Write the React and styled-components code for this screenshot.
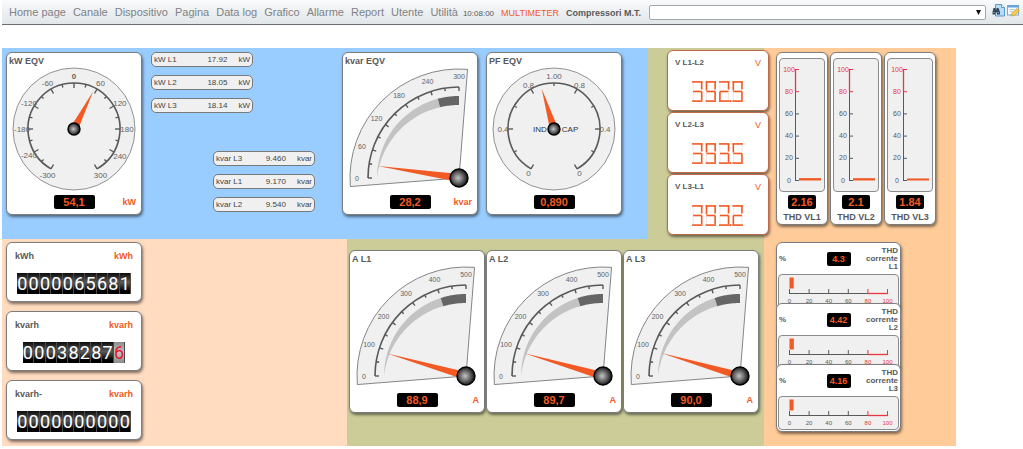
import React from 'react';
import styled, { createGlobalStyle } from 'styled-components';

const ORANGE = '#f15a24';
const GREY = '#58595b';
const RED = '#e8383d';

const menu = [
  'Home page', 'Canale', 'Dispositivo', 'Pagina', 'Data log',
  'Grafico', 'Allarme', 'Report', 'Utente', 'Utilità',
];

const activePower = [
  { label: 'kW L1', value: '17.92', unit: 'kW' },
  { label: 'kW L2', value: '18.05', unit: 'kW' },
  { label: 'kW L3', value: '18.14', unit: 'kW' },
];

const reactivePower = [
  { label: 'kvar L3', value: '9.460', unit: 'kvar' },
  { label: 'kvar L1', value: '9.170', unit: 'kvar' },
  { label: 'kvar L2', value: '9.540', unit: 'kvar' },
];

const voltages = [
  { label: 'V L1-L2', value: '392.9' },
  { label: 'V L2-L3', value: '393.5' },
  { label: 'V L3-L1', value: '393.2' },
];

const currents = [
  { label: 'A L1', value: 88.9, text: '88,9' },
  { label: 'A L2', value: 89.7, text: '89,7' },
  { label: 'A L3', value: 90, text: '90,0' },
];

const thdVoltages = [
  { label: 'THD VL1', value: '2.16' },
  { label: 'THD VL2', value: '2.1' },
  { label: 'THD VL3', value: '1.84' },
];

const thdCurrents = [
  { phase: 'L1', value: '4.3' },
  { phase: 'L2', value: '4.42' },
  { phase: 'L3', value: '4.16' },
];

const counters = [
  { label: 'kWh', unit: 'kWh', digits: '0000065681' },
  { label: 'kvarh', unit: 'kvarh', digits: '000382876', decimal: true },
  { label: 'kvarh-', unit: 'kvarh', digits: '0000000000' },
];

// 0 degrees points up, angles grow clockwise
const polar = (cx, cy, r, deg) => {
  const a = (deg * Math.PI) / 180;
  return [cx + r * Math.sin(a), cy - r * Math.cos(a)];
};

const Tick = ({ cx, cy, r, length, deg, width }) => {
  const [x1, y1] = polar(cx, cy, r, deg);
  const [x2, y2] = polar(cx, cy, r - length, deg);
  return <line x1={x1} y1={y1} x2={x2} y2={y2} stroke={GREY} strokeWidth={width} />;
};

const Needle = ({ cx, cy, length, base, deg }) => {
  const tip = polar(cx, cy, length, deg);
  const left = polar(cx, cy, base, deg - 90);
  const right = polar(cx, cy, base, deg + 90);
  return <polygon points={`${tip} ${left} ${right}`} fill={ORANGE} />;
};

const Hub = ({ cx, cy, r, id }) => (
  <>
    <defs>
      <radialGradient id={id} cx="45%" cy="50%" r="50%">
        <stop offset="0%" stopColor="#c4c4c4" />
        <stop offset="55%" stopColor="#6a6a6a" />
        <stop offset="100%" stopColor="#1c1c1c" />
      </radialGradient>
    </defs>
    <circle cx={cx} cy={cy} r={r} fill={`url(#${id})`} stroke="#000" strokeWidth="1.4" />
  </>
);

const RoundDial = ({ id, labels, angle, tips, sides }) => {
  const cx = 67;
  const cy = 62;
  const ticks = [];
  const step = labels.length > 7 ? 15 : 30;
  for (let d = -150; d <= 150; d += step) ticks.push(d);
  const [x1, y1] = polar(cx, cy, 46, -150);
  const [x2, y2] = polar(cx, cy, 46, 150);

  return (
    <DialSvg viewBox="0 0 134 124">
      <circle cx={cx} cy={cy} r="61" fill="#f0f0f0" stroke="#77787a" strokeWidth="0.8" />
      <path d={`M${x1} ${y1}A46 46 0 1 1 ${x2} ${y2}`} fill="none" stroke={GREY} strokeWidth="1.6" />
      {ticks.map((d) => (
        <Tick key={d} cx={cx} cy={cy} r={46} length={tips.includes(d) ? 5 : 3} deg={d} width={1.4} />
      ))}
      {labels.map(([text, d, r]) => {
        const [x, y] = polar(cx, cy, r || 53, d);
        return (
          <ScaleText key={d} x={x} y={y + 3} $size={8} $bold={text === '0' && d === 0}>
            {text}
          </ScaleText>
        );
      })}
      {sides && (
        <>
          <ScaleText x={cx - 14} y={cy + 3} $size={8} $color="#333">IND</ScaleText>
          <ScaleText x={cx + 16} y={cy + 3} $size={8} $color="#333">CAP</ScaleText>
        </>
      )}
      <Needle cx={cx} cy={cy} length={42} base={4} deg={angle} />
      <Hub cx={cx} cy={cy} r={6} id={id} />
    </DialSvg>
  );
};

const QuarterDial = ({ id, max, value, alarm }) => {
  const cx = 116;
  const cy = 111;
  const toDeg = (v) => -90 + (v / max) * 90;
  const [ox1, oy1] = polar(cx, cy, 109, -94.5);
  const [ox2, oy2] = polar(cx, cy, 109, 4.5);
  const ticks = Array.from({ length: 11 }, (_, i) => i);

  // band gets thicker as the value grows
  const band = (from, to) => {
    const outer = [];
    const inner = [];
    for (let i = 0; i <= 24; i += 1) {
      const d = from + ((to - from) * i) / 24;
      const thickness = 9 * Math.cos((d * Math.PI) / 180);
      outer.push(polar(cx, cy, 82, d).join(','));
      inner.unshift(polar(cx, cy, 82 - thickness, d).join(','));
    }
    return [...outer, ...inner].join(' ');
  };

  return (
    <DialSvg viewBox="0 0 134 124">
      <path
        d={`M${cx} ${cy}L${ox1} ${oy1}A109 109 0 0 1 ${ox2} ${oy2}Z`}
        fill="#f0f0f0"
        stroke="#77787a"
        strokeWidth="0.9"
      />
      <polygon points={band(-90, toDeg(alarm))} fill="#c3c3c3" />
      <polygon points={band(toDeg(alarm), 0)} fill="#666" />
      <path
        d={`M${cx - 91} ${cy}A91 91 0 0 1 ${cx} ${cy - 91}`}
        fill="none"
        stroke={GREY}
        strokeWidth="1.6"
      />
      {ticks.map((i) => (
        <Tick key={i} cx={cx} cy={cy} r={91} length={i % 2 ? 3 : 4} deg={-90 + i * 9} width={1.4} />
      ))}
      {[0, 1, 2, 3, 4, 5].map((i) => {
        const [x, y] = polar(cx, cy, 102, -90 + i * 18);
        return (
          <ScaleText key={i} x={x} y={y + 3} $size={7}>
            {(max / 5) * i}
          </ScaleText>
        );
      })}
      <Needle cx={cx} cy={cy} length={82} base={4} deg={toDeg(value)} />
      <Hub cx={cx} cy={cy} r={9} id={id} />
    </DialSvg>
  );
};

const scale = [0, 20, 40, 60, 80, 100];

const VerticalScale = ({ value }) => (
  <svg width="44" height="132" viewBox="0 0 44 132">
    <line x1="15.5" y1="32" x2="15.5" y2="122" stroke={GREY} />
    <line x1="15.5" y1="10" x2="15.5" y2="32" stroke={RED} strokeWidth="1.3" />
    {scale.map((v) => {
      const y = 121.5 - v * 1.11;
      const color = v >= 80 ? RED : GREY;
      return (
        <g key={v}>
          <line x1="15" y1={y} x2="19" y2={y} stroke={color} />
          <ScaleText x={9} y={y + 2} $size={7} $color={color}>{v}</ScaleText>
        </g>
      );
    })}
    <rect x="19" y={121.5 - value * 1.11} width="22" height={value * 1.11} fill={ORANGE} />
  </svg>
);

const HorizontalScale = ({ value }) => (
  <svg width="119" height="32" viewBox="0 0 119 32">
    <line x1="10" y1="18.5" x2="89" y2="18.5" stroke={GREY} />
    <line x1="89" y1="18.5" x2="109" y2="18.5" stroke={RED} strokeWidth="1.3" />
    {scale.map((v) => {
      const x = 10.5 + v * 0.98;
      const color = v >= 80 ? RED : GREY;
      return (
        <g key={v}>
          <line x1={x} y1="14" x2={x} y2="19" stroke={color} />
          <ScaleText x={x} y={28} $size={6} $color={color}>{v}</ScaleText>
        </g>
      );
    })}
    <rect x="10.5" y="2.5" width={value * 0.98} height="11" fill={ORANGE} />
  </svg>
);

// segment order: top, top right, bottom right, bottom, bottom left, top left, middle
const segmentLines = [
  [0, 1, 11, 1], [10, 1, 10, 9], [10, 11, 10, 20], [0, 21, 11, 21],
  [1, 11, 1, 21], [1, 1, 1, 10], [1, 11, 10, 11],
];
const segmentMap = { 2: '1101101', 3: '1111001', 5: '1011011', 9: '1111011' };

const SegmentDisplay = ({ value }) => {
  const digits = value.replace('.', '').split('');
  return (
    <svg width="56" height="24" viewBox="0 0 56 24" role="img" aria-label={value}>
      {digits.map((digit, i) => (
        <g key={i} transform={`translate(${i * 14 + 1} 1)`}>
          {segmentLines.map(([x1, y1, x2, y2], s) => (
            segmentMap[digit][s] === '0' && (
              <line key={s} x1={x1} y1={y1} x2={x2} y2={y2} stroke="#f1e6e6" />
            )
          ))}
          {segmentLines.map(([x1, y1, x2, y2], s) => (
            segmentMap[digit][s] === '1' && (
              <line key={s} x1={x1} y1={y1} x2={x2} y2={y2} stroke={ORANGE} strokeWidth="1.7" />
            )
          ))}
        </g>
      ))}
      <rect x="40" y="21" width="2" height="2" fill={ORANGE} />
    </svg>
  );
};

const SearchIcon = () => (
  <svg width="13" height="13" viewBox="0 0 13 13">
    <path d="M3.5 .5h6l3 3v8.500h-9z" fill="#b9dcf5" stroke="#5b9bd0" />
    <path d="M9.500 .5v3h3" fill="#fff" stroke="#5b9bd0" />
    <path d="M1.500 4h2v1.500h1V4h2l1.500 4v2.500H5V8.500H3.500v2H.5V8z" fill="#34495e" />
    <path d="M1.500 8.500h1M5.800 8.500h1" stroke="#a9c4dc" />
  </svg>
);

const EditIcon = () => (
  <svg width="13" height="13" viewBox="0 0 13 13">
    <rect x=".5" y="1.500" width="11" height="9.500" fill="#f4f9fd" stroke="#7fa8cf" />
    <rect x="1" y="1" width="10.500" height="2.500" fill="#6aa2dc" />
    <path d="M2.500 5.500h5M2.500 7.500h3" stroke="#b7cbe0" />
    <path d="M4 12l1-3 5-4.500 2.300 2.300L7.500 11.500z" fill="#f5cf4b" stroke="#c79a2b" strokeWidth=".7" />
  </svg>
);

const App = () => {
  return (
    <>
      <GlobalStyle />
      <Header>
        <Nav>
          {menu.map((item) => (
            <NavLink key={item} href="#">{item}</NavLink>
          ))}
        </Nav>
        <Clock>10:08:00</Clock>
        <DeviceType>MULTIMETER</DeviceType>
        <DeviceLabel htmlFor="device">Compressori M.T.</DeviceLabel>
        <SelectWrap>
          <Select id="device" defaultValue="">
            <option value="" />
          </Select>
          <SelectArrow viewBox="0 0 6 6">
            <path d="M0 0h6L3 6z" fill="#111" />
          </SelectArrow>
        </SelectWrap>
        <IconButton aria-label="Cerca"><SearchIcon /></IconButton>
        <IconButton aria-label="Modifica"><EditIcon /></IconButton>
      </Header>

      <Board>
        <PowerZone>
          <Card>
            <CardTitle>kW EQV</CardTitle>
            <RoundDial
              id="hub-kw"
              angle={54.1 * 0.5}
              tips={[-150, -120, -90, -60, -30, 0, 30, 60, 90, 120, 150]}
              labels={[
                ['-300', -150], ['-240', -120, 52], ['-180', -90, 52], ['-120', -60, 52], ['-60', -30],
                ['0', 0], ['60', 30], ['120', 60], ['180', 90], ['240', 120], ['300', 150],
              ]}
            />
            <CardFooter>
              <ValueBox>54,1</ValueBox>
              <Unit>kW</Unit>
            </CardFooter>
          </Card>

          <Readings>
            <ReadingList>
              {activePower.map((r) => (
                <Reading key={r.label}>
                  <ReadingLabel>{r.label}</ReadingLabel>
                  <span>{r.value}</span>
                  <span>{r.unit}</span>
                </Reading>
              ))}
            </ReadingList>
            <ReadingList $end>
              {reactivePower.map((r) => (
                <Reading key={r.label}>
                  <ReadingLabel>{r.label}</ReadingLabel>
                  <span>{r.value}</span>
                  <span>{r.unit}</span>
                </Reading>
              ))}
            </ReadingList>
          </Readings>

          <CardRow>
            <Card>
              <CardTitle>kvar EQV</CardTitle>
              <QuarterDial id="hub-kvar" max={300} value={28.2} alarm={250} />
              <CardFooter>
                <ValueBox>28,2</ValueBox>
                <Unit>kvar</Unit>
              </CardFooter>
            </Card>
            <Card>
              <CardTitle>PF EQV</CardTitle>
              <RoundDial
                id="hub-pf"
                angle={-17}
                sides
                tips={[-150, -90, -30, 30, 90, 150]}
                labels={[
                  ['0', -150, 51], ['0.4', -90, 51], ['0.8', -30, 51], ['1.00', 0],
                  ['0.8', 30, 51], ['0.4', 90, 51], ['0', 150, 51],
                ]}
              />
              <CardFooter>
                <ValueBox>0,890</ValueBox>
              </CardFooter>
            </Card>
          </CardRow>
        </PowerZone>

        <VoltageZone>
          {voltages.map((v) => (
            <VoltageCard key={v.label}>
              <VoltageHead>
                {v.label}
                <VoltageUnit>V</VoltageUnit>
              </VoltageHead>
              <SegmentDisplay value={v.value} />
            </VoltageCard>
          ))}
        </VoltageZone>

        <ThdZone>
          <ThdRow>
            {thdVoltages.map((t) => (
              <ThdVoltageCard key={t.label}>
                <ScalePanel><VerticalScale value={Number(t.value)} /></ScalePanel>
                <ValueBox $width={28}>{t.value}</ValueBox>
                <ThdLabel>{t.label}</ThdLabel>
              </ThdVoltageCard>
            ))}
          </ThdRow>
          <ThdStack>
            {thdCurrents.map((t) => (
              <ThdCurrentCard key={t.phase}>
                <ThdHead>
                  <span>%</span>
                  <ValueBox $width={24} $small>{t.value}</ValueBox>
                  <ThdName>THD corrente {t.phase}</ThdName>
                </ThdHead>
                <ScalePanel><HorizontalScale value={Number(t.value)} /></ScalePanel>
              </ThdCurrentCard>
            ))}
          </ThdStack>
        </ThdZone>

        <EnergyZone>
          {counters.map((c) => (
            <CounterCard key={c.label}>
              <CounterHead>
                {c.label}
                <CounterUnit>{c.unit}</CounterUnit>
              </CounterHead>
              <Counter>
                {c.digits.split('').map((d, i) => (
                  <Digit key={i} $decimal={c.decimal && i === c.digits.length - 1}>{d}</Digit>
                ))}
              </Counter>
            </CounterCard>
          ))}
        </EnergyZone>

        <CurrentZone>
          {currents.map((c) => (
            <Card key={c.label}>
              <CardTitle>{c.label}</CardTitle>
              <QuarterDial id={`hub-${c.text}`} max={500} value={c.value} alarm={400} />
              <CardFooter>
                <ValueBox>{c.text}</ValueBox>
                <Unit>A</Unit>
              </CardFooter>
            </Card>
          ))}
        </CurrentZone>
      </Board>
    </>
  );
};

const GlobalStyle = createGlobalStyle`
  * {
    box-sizing: border-box;
  }

  body {
    margin: 0;
    background: #fff;
    color: ${GREY};
    font-family: "Liberation Sans", Arial, sans-serif;
    font-size: 8px;
  }

  svg {
    display: block;
  }
`;

const Header = styled.header`
  display: flex;
  align-items: center;
  height: 25px;
  margin-left: 2px;
  padding: 0 3px 0 7px;
  background: linear-gradient(#f9fafb, #e1e6e9);
  border-bottom: 1px solid #6b6e73;
`;

const Nav = styled.nav`
  display: flex;
  gap: 7px;
`;

const NavLink = styled.a`
  color: #808285;
  font-size: 11px;
  line-height: 14px;
  text-decoration: none;
  white-space: nowrap;
`;

const Clock = styled.span`
  margin: 3px 7px 0 5px;
  font-size: 8px;
`;

const DeviceType = styled.span`
  margin: 2px 7px 0 0;
  color: ${ORANGE};
  font-size: 9px;
`;

const DeviceLabel = styled.label`
  margin: 2px 8px 0 0;
  font-size: 9px;
  font-weight: bold;
  white-space: nowrap;
`;

const SelectWrap = styled.div`
  position: relative;
  flex: 1;
  margin-right: 6px;
`;

const Select = styled.select`
  display: block;
  width: 100%;
  height: 15px;
  appearance: none;
  background: #fff;
  border: 1px solid #a3a7ab;
  border-radius: 2px;
  font-size: 9px;
`;

const SelectArrow = styled.svg`
  position: absolute;
  right: 5px;
  top: 5px;
  width: 5px;
  height: 5px;
  pointer-events: none;
`;

const IconButton = styled.button`
  margin: 0 0 3px;
  padding: 0;
  border: none;
  background: none;
  cursor: pointer;

  & + & {
    margin-left: 2px;
  }
`;

const Board = styled.main`
  display: grid;
  grid-template-columns: minmax(0, 345fr) minmax(0, 301fr) minmax(0, 116fr) minmax(0, 192fr);
  margin: 23px 67px 0 2px;
`;

const PowerZone = styled.section`
  grid-area: 1 / 1 / 2 / 3;
  display: flex;
  align-items: flex-start;
  padding: 4px 4px 24px;
  background: #99ccff;
`;

const VoltageZone = styled.section`
  grid-area: 1 / 3 / 2 / 4;
  position: relative;
  z-index: 1;
  display: flex;
  flex-direction: column;
  gap: 1px;
  padding: 2px 0 0 19px;
  background: #cccc99;
`;

const ThdZone = styled.section`
  grid-area: 1 / 4 / 3 / 5;
  padding: 4px 0 12px 12px;
  background: #ffcc99;
`;

const EnergyZone = styled.section`
  grid-area: 2 / 1 / 3 / 2;
  display: flex;
  flex-direction: column;
  gap: 9px;
  padding: 3px 4px 6px;
  background: #ffdbc0;
`;

const CurrentZone = styled.section`
  grid-area: 2 / 2 / 3 / 4;
  display: flex;
  align-items: flex-start;
  gap: 1px;
  padding: 11px 2px;
  background: #cccc99;
`;

const Panel = styled.div`
  background: #fff;
  border: 1px solid #7d7d7d;
  border-radius: 6px;
  box-shadow: 1px 2px 3px rgba(0, 0, 0, 0.5);
`;

const Card = styled(Panel)`
  flex: none;
  width: 136px;
  height: 163px;
`;

const CardRow = styled.div`
  display: flex;
  gap: 8px;
`;

const CardTitle = styled.h2`
  margin: 0;
  padding: 2px 2px 0;
  font-size: 9px;
  line-height: 12px;
`;

const DialSvg = styled.svg`
  width: 134px;
  height: 124px;
`;

const ScaleText = styled.text`
  fill: ${(p) => p.$color || '#626365'};
  font-size: ${(p) => p.$size}px;
  font-weight: ${(p) => (p.$bold ? 'bold' : 'normal')};
  text-anchor: middle;
`;

const CardFooter = styled.div`
  display: grid;
  grid-template-columns: 1fr auto 1fr;
  align-items: center;
  margin-top: 4px;
  padding: 0 5px;
`;

const ValueBox = styled.output`
  grid-column: 2;
  width: ${(p) => p.$width || 41}px;
  height: 14px;
  border-radius: 2px;
  background: #000;
  color: ${ORANGE};
  font-size: ${(p) => (p.$small ? 9 : 11)}px;
  font-weight: bold;
  line-height: 14px;
  text-align: center;
`;

const Unit = styled.span`
  justify-self: end;
  color: ${ORANGE};
  font-size: 9px;
  font-weight: bold;
`;

const Readings = styled.div`
  display: flex;
  flex-direction: column;
  gap: 38px;
  width: 164px;
  margin: 0 27px 0 9px;
`;

const ReadingList = styled.div`
  display: flex;
  flex-direction: column;
  gap: 8px;
  align-self: ${(p) => (p.$end ? 'flex-end' : 'flex-start')};
  width: 102px;
`;

const Reading = styled.div`
  display: flex;
  gap: 11px;
  height: 15px;
  padding: 0 2px;
  background: #f0f0f0;
  border: 1px solid #77787a;
  border-radius: 5px;
  color: #444;
  line-height: 13px;
`;

const ReadingLabel = styled.span`
  flex: 1;
`;

const VoltageCard = styled(Panel)`
  display: flex;
  flex-direction: column;
  align-items: center;
  gap: 12px;
  width: 102px;
  height: 61px;
  padding: 7px;
  border-color: #c0694a;
`;

const VoltageHead = styled.div`
  display: flex;
  justify-content: space-between;
  width: 100%;
  font-weight: bold;
  line-height: 10px;
`;

const VoltageUnit = styled.span`
  color: ${ORANGE};
  font-size: 9px;
  font-weight: normal;
`;

const ThdRow = styled.div`
  display: flex;
  gap: 2px;
`;

const ThdVoltageCard = styled(Panel)`
  display: flex;
  flex-direction: column;
  align-items: center;
  gap: 3px;
  width: 52px;
  height: 173px;
  padding-top: 5px;
`;

const ScalePanel = styled.div`
  background: #f0f0f0;
  border: 1px solid #8a8b8d;
  border-radius: 4px;
`;

const ThdLabel = styled.div`
  font-size: 9px;
  font-weight: bold;
  line-height: 10px;
`;

const ThdStack = styled.div`
  display: flex;
  flex-direction: column;
  margin-top: 17px;
`;

const ThdCurrentCard = styled(Panel)`
  width: 125px;
  height: 68px;
  padding: 0 1px;

  & + & {
    margin-top: -7px;
  }
`;

const ThdHead = styled.div`
  display: grid;
  grid-template-columns: 1fr auto 1fr;
  align-items: center;
  height: 31px;
  padding: 0 1px;
  font-weight: bold;
  line-height: 8px;
`;

const ThdName = styled.span`
  justify-self: end;
  width: 34px;
  text-align: right;
`;

const CounterCard = styled(Panel)`
  width: 136px;
  height: 60px;
  padding: 8px;
`;

const CounterHead = styled.div`
  display: flex;
  justify-content: space-between;
  font-size: 9px;
  font-weight: bold;
  line-height: 10px;
`;

const CounterUnit = styled.span`
  color: ${ORANGE};
`;

const Counter = styled.div`
  display: flex;
  justify-content: center;
  margin: 12px 2px 0;
`;

const Digit = styled.span`
  width: 10%;
  height: 21px;
  background: ${(p) =>
    p.$decimal
      ? 'linear-gradient(#8a8a8a, #c4c4c4 50%, #8a8a8a)'
      : 'linear-gradient(#0c0c0c, #5a5a5a 45%, #000 85%)'};
  border-right: 1px solid #4a4a4a;
  color: ${(p) => (p.$decimal ? '#e5142c' : '#fff')};
  font-family: Roboto, "Liberation Sans", sans-serif;
  font-size: 18px;
  line-height: 21px;
  text-align: center;
`;

export default App;
